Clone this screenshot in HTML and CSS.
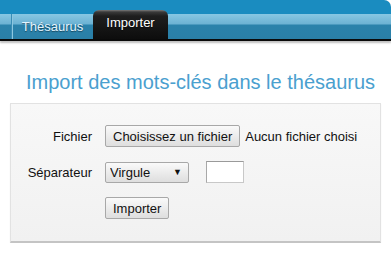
FILE: index.html
```html
<!DOCTYPE html>
<html lang="fr">
<head>
  <meta charset="UTF-8">
  <title>Import des mots-clés</title>
  <link rel="stylesheet" href="styles.css">
</head>
<body>
  <div class="header">
    <div class="tabs">
      <a class="tab">Thésaurus</a>
      <a class="tab active">Importer</a>
    </div>
  </div>

  <div class="content">
    <h1 class="title">Import des mots-clés dans le thésaurus</h1>

    <form class="import-form">
      <label class="label">Fichier</label>
      <div class="field">
        <button type="button" class="btn">Choisissez un fichier</button>
        <span class="file-name">Aucun fichier choisi</span>
      </div>

      <label class="label">Séparateur</label>
      <div class="field">
        <span class="select-wrap">
          <select class="select">
            <option>Virgule</option>
            <option>Point-virgule</option>
            <option>Tabulation</option>
          </select>
        </span>
        <input type="text" class="text-input">
      </div>

      <span></span>
      <div class="field">
        <button type="button" class="btn">Importer</button>
      </div>
    </form>
  </div>
</body>
</html>
```

FILE: styles.css
```css
body {
  margin: 0;
  background: #fff;
  font-family: "Liberation Sans", Arial, sans-serif;
  font-size: 13px;
  color: #111;
}

.header {
  background: #1a8cc0;
  border-top-right-radius: 7px;
  padding-top: 10px;
  border-bottom: 2px solid #0a0a0a;
  box-shadow: 0 2px 2px rgba(0,0,0,0.25);
}

.tabs {
  display: flex;
  align-items: flex-end;
  padding-left: 11px;
  background: linear-gradient(to bottom, #1a8cc0 0, #1a8cc0 4px, #87c7e3 4px, #6cb2d3 14px, #2a82ab 15px, #2a7fa7 100%);
}

.tab {
  display: block;
  height: 25px;
  line-height: 26px;
  box-sizing: border-box;
  color: #e4f5ff;
  text-shadow: 0 1px 1px rgba(0,0,0,0.45);
  text-decoration: none;
}

.tab:first-child {
  width: 82px;
  text-align: center;
  border-left: 1px solid #3a8db5;
  box-shadow: inset 1px 0 0 #8cc6df;
}

.tab.active {
  height: 29px;
  width: 75px;
  line-height: 26px;
  text-align: center;
  color: #fff;
  background: linear-gradient(to bottom, #7a7a7a 0, #3a3a3a 2px, #1e1e1e 6px, #0d0d0d 100%);
  border-radius: 6px 6px 0 0;
}

.content {
  padding: 0 10px;
}

.title {
  margin: 30px 0 0 16px;
  font-size: 20px;
  font-weight: normal;
  color: #4aa0cf;
  height: 32px;
}

.import-form {
  margin: 0;
  padding: 21px 0 22px;
  display: grid;
  grid-template-columns: 81px auto;
  column-gap: 13px;
  row-gap: 14px;
  align-items: center;
  background: linear-gradient(to bottom, #f8f8f8, #f1f1f1);
  border: 1px solid #e2e2e2;
  border-bottom: 2px solid #c4c4c4;
  box-shadow: 0 1px 1px rgba(0,0,0,0.08);
}

.label {
  text-align: right;
}

.field {
  display: flex;
  align-items: center;
  gap: 5px;
}

.btn {
  height: 22px;
  padding: 0 7px;
  font-family: inherit;
  font-size: 13px;
  color: #111;
  background: linear-gradient(to bottom, #fafafa, #dedede);
  border: 1px solid #a8a8a8;
  border-radius: 2px;
}

.select-wrap {
  position: relative;
  display: inline-block;
}

.select-wrap::after {
  content: "\25BC";
  position: absolute;
  right: 7px;
  top: 5px;
  font-size: 9px;
  color: #111;
  pointer-events: none;
}

.select {
  appearance: none;
  display: block;
  width: 84px;
  height: 21px;
  padding: 0 4px;
  font-family: inherit;
  font-size: 13px;
  color: #111;
  background: linear-gradient(to bottom, #fafafa, #dedede);
  border: 1px solid #a8a8a8;
  border-radius: 2px;
}

.text-input {
  width: 38px;
  height: 22px;
  box-sizing: border-box;
  margin-left: 12px;
  background: #fff;
  border: 1px solid #c8c8c8;
  border-top-color: #9a9a9a;
  border-left-color: #a8a8a8;
}
```
